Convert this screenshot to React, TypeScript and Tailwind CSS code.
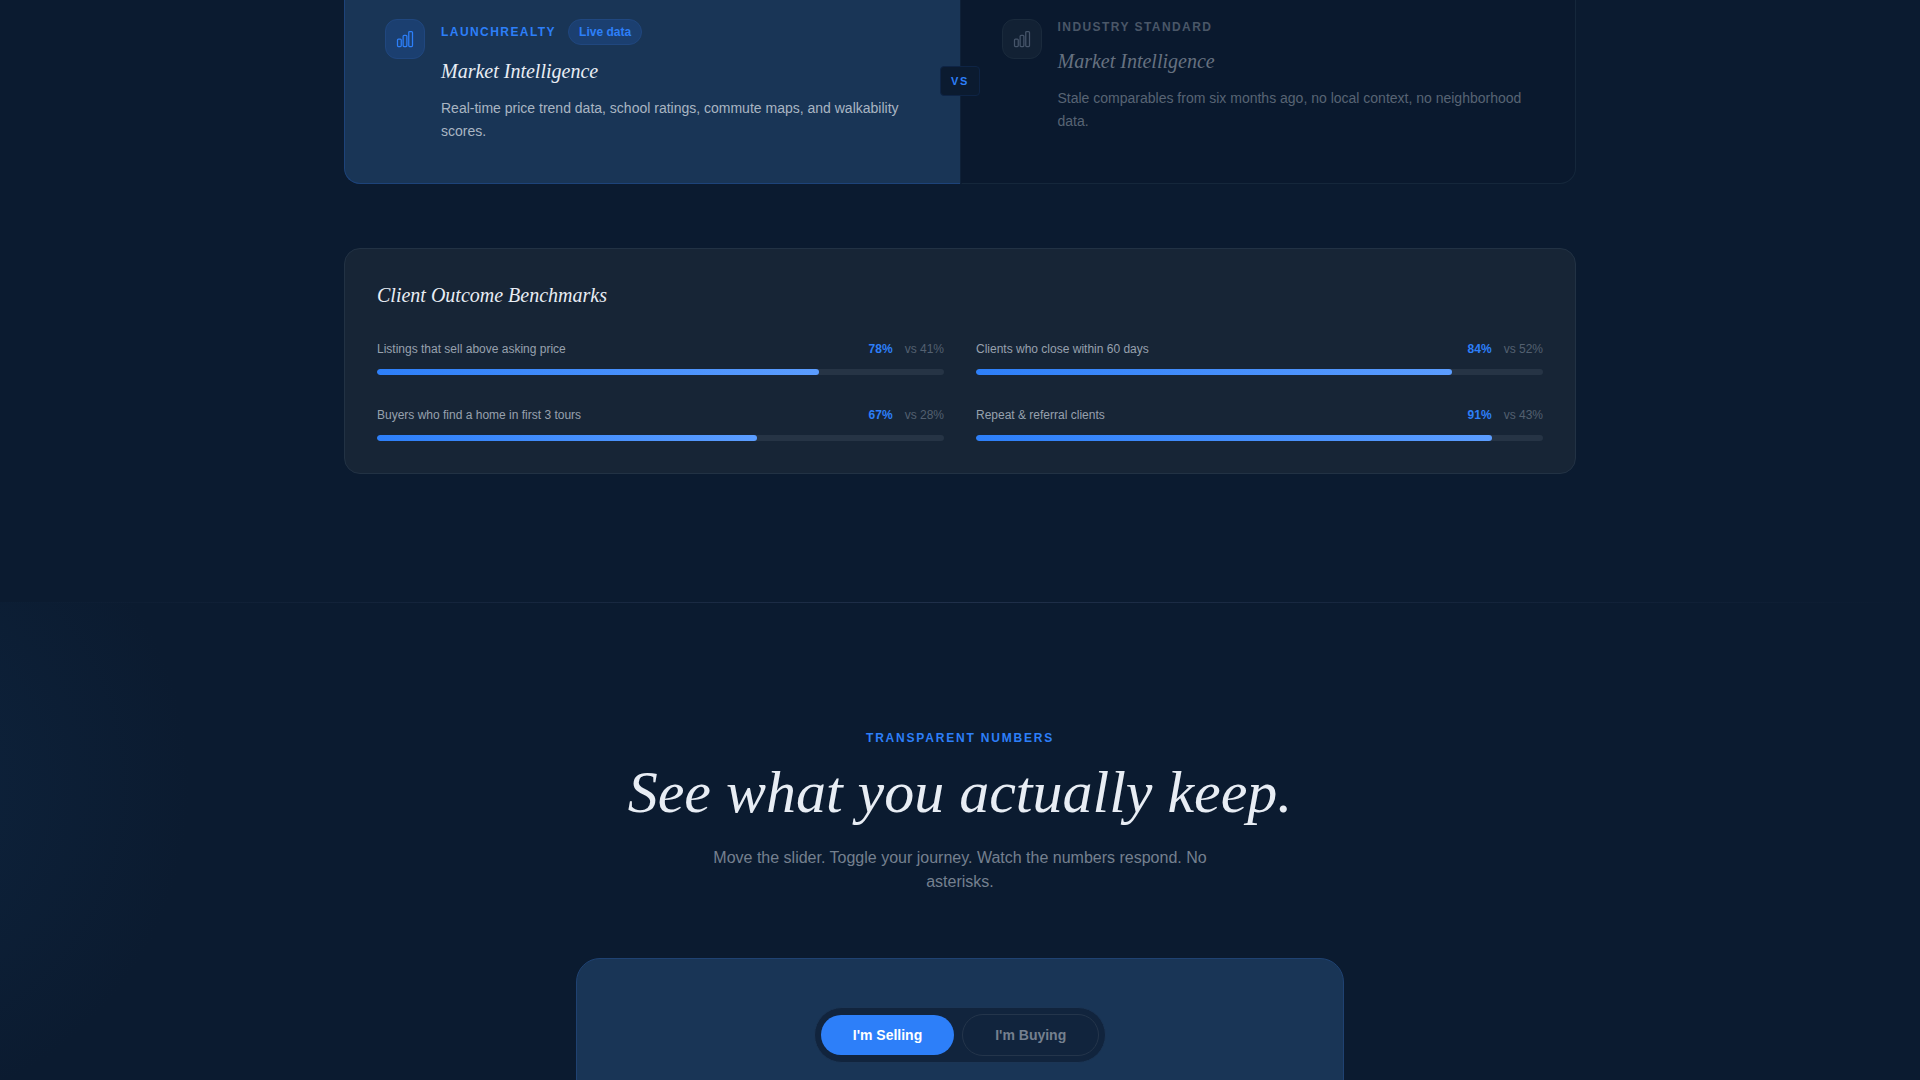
import { ReactNode } from "react";

function BarsIcon() {
  return (
    <svg
      className="size-5"
      viewBox="0 0 24 24"
      fill="none"
      stroke="currentColor"
      strokeWidth="1.5"
      strokeLinecap="round"
      strokeLinejoin="round"
      aria-hidden="true"
    >
      <path d="M3 13.125C3 12.504 3.504 12 4.125 12h2.25c.621 0 1.125.504 1.125 1.125v6.75C7.5 20.496 6.996 21 6.375 21h-2.25A1.125 1.125 0 0 1 3 19.875v-6.75ZM9.75 8.625c0-.621.504-1.125 1.125-1.125h2.25c.621 0 1.125.504 1.125 1.125v11.25c0 .621-.504 1.125-1.125 1.125h-2.25a1.125 1.125 0 0 1-1.125-1.125V8.625ZM16.5 4.125c0-.621.504-1.125 1.125-1.125h2.25C20.496 3 21 3.504 21 4.125v15.75c0 .621-.504 1.125-1.125 1.125h-2.25a1.125 1.125 0 0 1-1.125-1.125V4.125Z" />
    </svg>
  );
}

const benchmarks = [
  { label: "Listings that sell above asking price", value: 78, other: 41 },
  { label: "Clients who close within 60 days", value: 84, other: 52 },
  { label: "Buyers who find a home in first 3 tours", value: 67, other: 28 },
  { label: "Repeat & referral clients", value: 91, other: 43 },
];

function Benchmark({ label, value, other }: { label: string; value: number; other: number }) {
  return (
    <div>
      <div className="mb-3 flex items-center justify-between text-xs">
        <span className="text-[#97a1ae]">{label}</span>
        <span className="flex gap-3">
          <span className="font-bold text-[#2d7ff9]">{value}%</span>
          <span className="text-[#536070]">vs {other}%</span>
        </span>
      </div>
      <div className="h-1.5 overflow-hidden rounded-full bg-[#263445]">
        <div
          className="h-full rounded-full bg-linear-to-r/srgb from-[#2d7ff9] to-[#5b9dff]"
          style={{ width: `${value}%` }}
        />
      </div>
    </div>
  );
}

function Container({ children }: { children: ReactNode }) {
  return <div className="mx-auto max-w-7xl px-6">{children}</div>;
}

export default function App() {
  return (
    <main className="h-screen overflow-hidden bg-[#0b1b30] font-['Liberation_Sans',Arial,sans-serif]">
      <section className="pb-32">
        <Container>
          <div className="mb-16 grid grid-cols-[1fr_1px_1fr]">
            <article className="flex gap-4 rounded-bl-2xl border-b border-l border-[#1d437a] bg-[#193556] px-10 pt-[19px] pb-10">
              <div className="flex size-10 shrink-0 items-center justify-center rounded-xl border border-[#20477f] bg-[#1b3f70] text-[#2d7ff9]">
                <BarsIcon />
              </div>
              <div>
                <div className="mb-3 flex items-center gap-3">
                  <span className="text-xs font-bold tracking-[0.12em] text-[#2d7ff9] uppercase">LaunchRealty</span>
                  <span className="rounded-full border border-[#20477f] bg-[#1b3f70] px-2.5 py-1 text-xs font-bold text-[#2d7ff9]">
                    Live data
                  </span>
                </div>
                <h3 className="mb-3 font-['Liberation_Serif',serif] text-xl text-[#e8edf4] italic">Market Intelligence</h3>
                <p className="text-sm leading-relaxed text-[#a9b5c3]">
                  Real-time price trend data, school ratings, commute maps, and walkability scores.
                </p>
              </div>
            </article>
            <div className="relative bg-[#0f2138]">
              <span className="absolute top-[66px] left-1/2 -translate-x-1/2 rounded border border-[#0e2445] bg-[#0b1b30] px-2.5 py-1.5 text-[11px] leading-4 font-bold tracking-[0.15em] text-[#2d7ff9]">
                VS
              </span>
            </div>
            <article className="flex gap-4 rounded-br-2xl border border-t-0 border-[#15273b] border-l-transparent bg-[#0a192e] px-10 pt-[19px] pb-10">
              <div className="flex size-10 shrink-0 items-center justify-center rounded-xl border border-[#1a2a3c] bg-[#122134] text-[#46556a]">
                <BarsIcon />
              </div>
              <div>
                <div className="mb-3 text-xs font-bold tracking-[0.12em] text-[#4a5768] uppercase">Industry Standard</div>
                <h3 className="mb-3 font-['Liberation_Serif',serif] text-xl text-[#667180] italic">Market Intelligence</h3>
                <p className="text-sm leading-relaxed text-[#586474]">
                  Stale comparables from six months ago, no local context, no neighborhood data.
                </p>
              </div>
            </article>
          </div>

          <div className="rounded-2xl border border-[#223244] bg-[#172536] p-8">
            <h3 className="mb-8 font-['Liberation_Serif',serif] text-xl text-[#e8edf4] italic">Client Outcome Benchmarks</h3>
            <div className="grid grid-cols-2 gap-8">
              {benchmarks.map((b) => (
                <Benchmark key={b.label} {...b} />
              ))}
            </div>
          </div>
        </Container>
      </section>

      <section className="relative bg-[radial-gradient(circle_at_-140px_184px,#0e243e_0px,#0b1b30_330px)] pt-32">
        <div className="absolute inset-x-0 top-0 h-px bg-linear-to-r/srgb from-transparent via-[#20304a] to-transparent" />
        <Container>
          <header className="mb-16 text-center">
            <p className="mb-4 text-xs font-bold tracking-[0.15em] text-[#2d7ff9] uppercase">Transparent Numbers</p>
            <h2 className="mb-6 font-['Liberation_Serif',serif] text-6xl text-[#e8edf4] italic">
              See what you actually keep.
            </h2>
            <p className="mx-auto max-w-lg text-base text-[#75808f]">
              Move the slider. Toggle your journey. Watch the numbers respond. No asterisks.
            </p>
          </header>
          <div className="mx-auto flex max-w-3xl justify-center rounded-3xl border border-[#1f4272] bg-[#193556] px-12 pt-12 pb-64">
            <div className="flex items-center gap-2 rounded-full border border-[#1b3555] bg-[#11243d] p-1.5">
              <button type="button" className="rounded-full bg-[#2d7ff9] px-8 py-2.5 text-sm font-bold text-white">
                I'm Selling
              </button>
              <button type="button" className="rounded-full border border-[#24354b] px-8 py-2.5 text-sm font-bold text-[#75808f]">
                I'm Buying
              </button>
            </div>
          </div>
        </Container>
      </section>
    </main>
  );
}
